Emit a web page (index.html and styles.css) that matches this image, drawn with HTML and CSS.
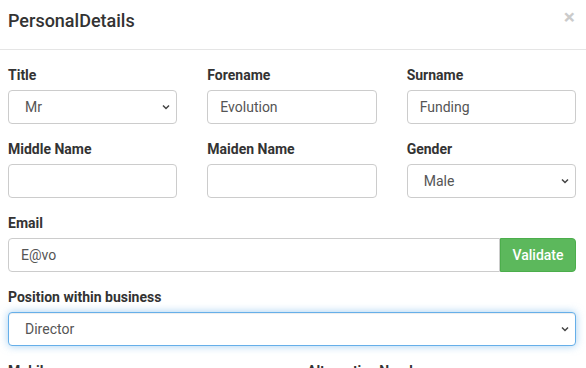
FILE: index.html
```html
<!DOCTYPE html>
<html>
<head>
<meta charset="utf-8">
<link rel="stylesheet" href="styles.css">
</head>
<body>
<div class="modal">
  <div class="modal-header">
    <h4 class="modal-title">PersonalDetails</h4>
    <span class="close">&times;</span>
  </div>
  <div class="modal-body">
    <div class="row three">
      <div class="group">
        <label>Title</label>
        <div class="select-wrap">
          <div class="control select">Mr</div>
          <svg class="chev" width="8" height="6" viewBox="0 0 8 6"><path d="M1 1.5 L4 4.5 L7 1.5" fill="none" stroke="#444" stroke-width="1.5"/></svg>
        </div>
      </div>
      <div class="group">
        <label>Forename</label>
        <div class="control">Evolution</div>
      </div>
      <div class="group">
        <label>Surname</label>
        <div class="control">Funding</div>
      </div>
    </div>
    <div class="row three">
      <div class="group">
        <label>Middle Name</label>
        <div class="control"></div>
      </div>
      <div class="group">
        <label>Maiden Name</label>
        <div class="control"></div>
      </div>
      <div class="group">
        <label>Gender</label>
        <div class="select-wrap">
          <div class="control select">Male</div>
          <svg class="chev" width="8" height="6" viewBox="0 0 8 6"><path d="M1 1.5 L4 4.5 L7 1.5" fill="none" stroke="#444" stroke-width="1.5"/></svg>
        </div>
      </div>
    </div>
    <div class="group">
      <label>Email</label>
      <div class="input-group">
        <div class="control grouped">E@vo</div>
        <button class="btn-validate">Validate</button>
      </div>
    </div>
    <div class="group">
      <label>Position within business</label>
      <div class="select-wrap">
        <div class="control select focus">Director</div>
        <svg class="chev" width="8" height="6" viewBox="0 0 8 6"><path d="M1 1.5 L4 4.5 L7 1.5" fill="none" stroke="#444" stroke-width="1.5"/></svg>
      </div>
    </div>
    <div class="row two">
      <div class="group"><label>Mobile</label></div>
      <div class="group"><label>Alternative Number</label></div>
    </div>
  </div>
</div>
</body>
</html>
```

FILE: styles.css
```css
* { box-sizing: border-box; }
html, body {
  margin: 0;
  padding: 0;
  background: #fff;
  font-family: Roboto, "Liberation Sans", Arial, sans-serif;
  color: #333;
  overflow: hidden;
}
.modal {
  width: 586px;
  height: 368px;
  overflow: hidden;
}
.modal-header {
  height: 50px;
  border-bottom: 1px solid #e5e5e5;
  display: flex;
  align-items: flex-start;
  justify-content: space-between;
  padding: 10px 11px 0 8px;
}
.modal-title {
  margin: 0;
  font-size: 18px;
  font-weight: 500;
  line-height: 22px;
  color: #333;
}
.close {
  font-size: 21px;
  font-weight: 700;
  line-height: 14px;
  color: #000;
  opacity: 0.2;
  margin-top: 0;
}
.modal-body {
  padding: 15px 10px 0 8px;
}
.row {
  display: grid;
  column-gap: 30px;
}
.row.three { grid-template-columns: 1fr 1fr 1fr; }
.row.two { grid-template-columns: 1fr 1fr; }
.group {
  margin-bottom: 15px;
}
label {
  display: block;
  font-size: 14px;
  font-weight: 700;
  line-height: 20px;
  margin-bottom: 5px;
  color: #333;
}
.control {
  height: 34px;
  border: 1px solid #ccc;
  border-radius: 4px;
  padding: 0 12px;
  font-size: 14px;
  line-height: 32px;
  color: #555;
  background: #fff;
}
.select-wrap {
  position: relative;
}
.control.select {
  padding-left: 16px;
}
.chev {
  position: absolute;
  right: 7px;
  top: 14px;
}
.control.focus {
  border-color: #66afe9;
  box-shadow: inset 0 1px 1px rgba(0,0,0,.075), 0 0 8px rgba(102,175,233,.6);
}
.input-group {
  display: flex;
}
.control.grouped {
  flex: 1;
  border-radius: 4px 0 0 4px;
}
.btn-validate {
  width: 76px;
  height: 34px;
  border: 1px solid #4cae4c;
  border-radius: 0 4px 4px 0;
  background: #5cb85c;
  color: #fff;
  font-family: Roboto, "Liberation Sans", Arial, sans-serif;
  font-size: 14px;
  font-weight: 500;
  padding: 0;
}
```
